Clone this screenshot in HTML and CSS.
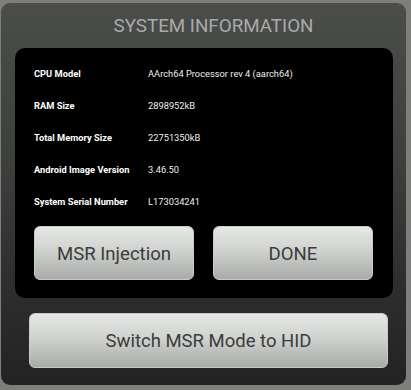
FILE: index.html
```html
<!DOCTYPE html>
<html>
<head>
<meta charset="utf-8">
<link rel="stylesheet" href="styles.css">
</head>
<body>
<div class="dialog">
  <div class="title">SYSTEM INFORMATION</div>
  <div class="panel">
    <div class="rows">
      <div class="row"><span class="label">CPU Model</span><span class="value">AArch64 Processor rev 4 (aarch64)</span></div>
      <div class="row"><span class="label">RAM Size</span><span class="value">2898952kB</span></div>
      <div class="row"><span class="label">Total Memory Size</span><span class="value">22751350kB</span></div>
      <div class="row"><span class="label">Android Image Version</span><span class="value">3.46.50</span></div>
      <div class="row"><span class="label">System Serial Number</span><span class="value">L173034241</span></div>
    </div>
    <div class="actions">
      <div class="btn">MSR Injection</div>
      <div class="btn">DONE</div>
    </div>
  </div>
  <div class="btn wide">Switch MSR Mode to HID</div>
</div>
</body>
</html>
```

FILE: styles.css
```css
html, body {
  margin: 0;
  padding: 0;
}
body {
  width: 411px;
  height: 390px;
  background: #7e7f7d;
  font-family: Roboto, "Liberation Sans", sans-serif;
  overflow: hidden;
}
.dialog {
  margin: 3px 5px 0 1px;
  width: 405px;
  height: 382px;
  box-sizing: border-box;
  border-radius: 9px;
  background: linear-gradient(to bottom, #4b4d4b 0%, #3e403e 40%, #2c2d2c 75%, #222322 100%);
  display: flex;
  flex-direction: column;
}
.title {
  height: 45px;
  display: flex;
  align-items: center;
  justify-content: center;
  color: #a9aaa9;
  font-size: 18.8px;
  padding-left: 20px;
  padding-top: 1px;
  box-sizing: border-box;
}
.panel {
  margin: 0 13px 0 14px;
  height: 250px;
  background: #000;
  border-radius: 10px;
  box-sizing: border-box;
  padding: 9px 20px 18px 19px;
  display: flex;
  flex-direction: column;
}
.rows {
  display: flex;
  flex-direction: column;
}
.row {
  height: 32px;
  display: flex;
  align-items: center;
  font-size: 9.3px;
  color: #fff;
}
.label {
  width: 114px;
  font-weight: bold;
}
.value {
  color: #eee;
}
.actions {
  margin-top: 9px;
  display: flex;
  gap: 19px;
}
.btn {
  box-sizing: border-box;
  height: 54px;
  border-radius: 6px;
  background: linear-gradient(to bottom, #e6e8e6 0%, #d0d2d0 45%, #a9aba9 100%);
  border: 1px solid #c9cbc9;
  color: #3b3c3b;
  font-size: 18.6px;
  display: flex;
  align-items: center;
  justify-content: center;
}
.actions .btn {
  width: 160px;
  padding-top: 2px;
}
.wide {
  margin: 15px 18px 0 28px;
  height: 55px;
  font-size: 18.5px;
}
```
